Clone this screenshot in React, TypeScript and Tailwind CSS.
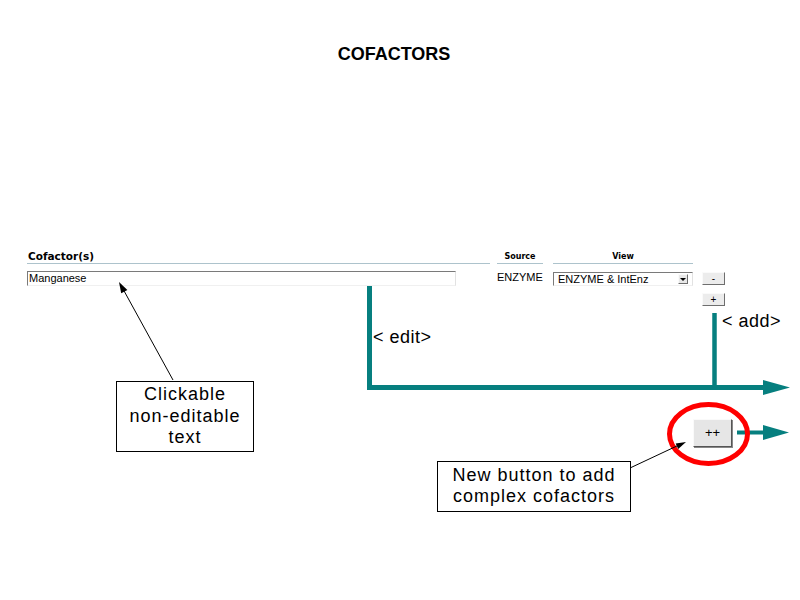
const TEAL = '#067f7f';

function Callout({ lines, className }: { lines: string[]; className: string }) {
  return (
    <div className={`absolute border border-black bg-white text-center text-[18px] leading-[21.5px] tracking-[1px] ${className}`}>
      {lines.map((l) => (
        <div key={l}>{l}</div>
      ))}
    </div>
  );
}

function SmallButton({ label, className = '' }: { label: string; className?: string }) {
  return (
    <div
      className={`flex items-center justify-center border border-t-[#fafafa] border-l-[#fafafa] border-r-[#6e6e6e] border-b-[#6e6e6e] bg-[#ececec] text-[10px] leading-none ${className}`}
    >
      {label}
    </div>
  );
}

export default function App() {
  return (
    <div className="relative w-[800px] h-[600px] overflow-hidden bg-white text-black font-['Liberation_Sans',Arial,sans-serif]">
      <h1 className="pt-[43px] pr-[12px] text-center text-[18px] leading-[22px] font-bold">COFACTORS</h1>

      {/* form row */}
      <div className="mt-[183px] ml-[27px] flex items-start">
        <div className="w-[463px]">
          <div className="h-[16px] border-b border-[#adc3cc] pt-[2px] pl-[1px] font-['DejaVu_Sans',sans-serif] text-[10.5px] font-bold leading-[12px]">
            Cofactor(s)
          </div>
          <div className="mt-[7px] h-[15px] w-[429px] border border-t-[#7a7a7a] border-l-[#7a7a7a] border-r-[#e2e2e2] border-b-[#f0f0f0] pl-[1px] text-[11px] leading-[13px]">
            Manganese
          </div>
        </div>

        <div className="ml-[7px] w-[46px]">
          <div className="h-[16px] border-b border-[#adc3cc] pt-[4px] text-center font-['DejaVu_Sans',sans-serif] text-[8px] font-bold leading-[10px]">
            Source
          </div>
          <div className="mt-[7px] text-[11px] leading-[13px]">ENZYME</div>
        </div>

        <div className="ml-[10px] w-[140px]">
          <div className="h-[16px] border-b border-[#adc3cc] pt-[4px] text-center font-['DejaVu_Sans',sans-serif] text-[8px] font-bold leading-[10px]">
            View
          </div>
          <div className="mt-[8px] flex h-[14px] items-center justify-between border border-t-[#7a7a7a] border-l-[#7a7a7a] border-r-[#e2e2e2] border-b-[#f0f0f0] pl-[4px] pr-[4px] text-[11px] leading-[12px]">
            <span>ENZYME &amp; IntEnz</span>
            <span className="flex h-[10px] w-[10px] items-center justify-center border border-t-[#fafafa] border-l-[#fafafa] border-r-[#6e6e6e] border-b-[#6e6e6e] bg-[#e8e8e8]">
              <span className="h-0 w-0 border-l-[3px] border-r-[3px] border-t-[3px] border-l-transparent border-r-transparent border-t-black" />
            </span>
          </div>
        </div>

        <div className="ml-[9px] flex flex-col pt-[24px]">
          <SmallButton label="-" className="h-[13px] w-[23px]" />
          <SmallButton label="+" className="mt-[8px] h-[13px] w-[23px]" />
        </div>
      </div>

      {/* annotation layer */}
      <svg className="pointer-events-none absolute left-0 top-0" width={800} height={600}>
        <path d="M369.5 286 V387.5 H765" fill="none" stroke={TEAL} strokeWidth={5} strokeLinejoin="miter" />
        <line x1={714.5} y1={313} x2={714.5} y2={387.5} stroke={TEAL} strokeWidth={4.5} />
        <polygon points="763,380 790,387.5 763,395" fill={TEAL} />
        <line x1={737} y1={432.5} x2={765} y2={432.5} stroke={TEAL} strokeWidth={4} />
        <polygon points="763,425 789,432.5 763,440" fill={TEAL} />
        <ellipse cx={708.5} cy={434} rx={39} ry={29.5} fill="none" stroke="#ff0000" strokeWidth={5} />
        <line x1={173} y1={380} x2={123} y2={289} stroke="black" strokeWidth={1} />
        <polygon points="119,282 127.4,289.9 121.2,293.3" fill="black" />
        <line x1={630} y1={468} x2={679} y2={445} stroke="black" strokeWidth={1} />
        <polygon points="686,442 678.2,448.9 675.7,443.5" fill="black" />
      </svg>

      <div className="absolute left-[373px] top-[327px] text-[18px] leading-[21px] tracking-[0.5px]">&lt; edit&gt;</div>
      <div className="absolute left-[722px] top-[311px] text-[18px] leading-[21px] tracking-[0.5px]">&lt; add&gt;</div>

      <div className="absolute left-[693px] top-[419px] flex h-[28px] w-[39px] items-center justify-center border border-t-[#fafafa] border-l-[#fafafa] border-r-[#555] border-b-[#555] bg-[#e6e6e6] text-[13px] shadow-[1px_1px_0_#888]">
        ++
      </div>

      <Callout lines={['Clickable', 'non-editable', 'text']} className="left-[116px] top-[381px] h-[71px] w-[138px] pt-[2px]" />
      <Callout lines={['New button to add', 'complex cofactors']} className="left-[437px] top-[461px] h-[51px] w-[194px] pt-[2.5px]" />
    </div>
  );
}
